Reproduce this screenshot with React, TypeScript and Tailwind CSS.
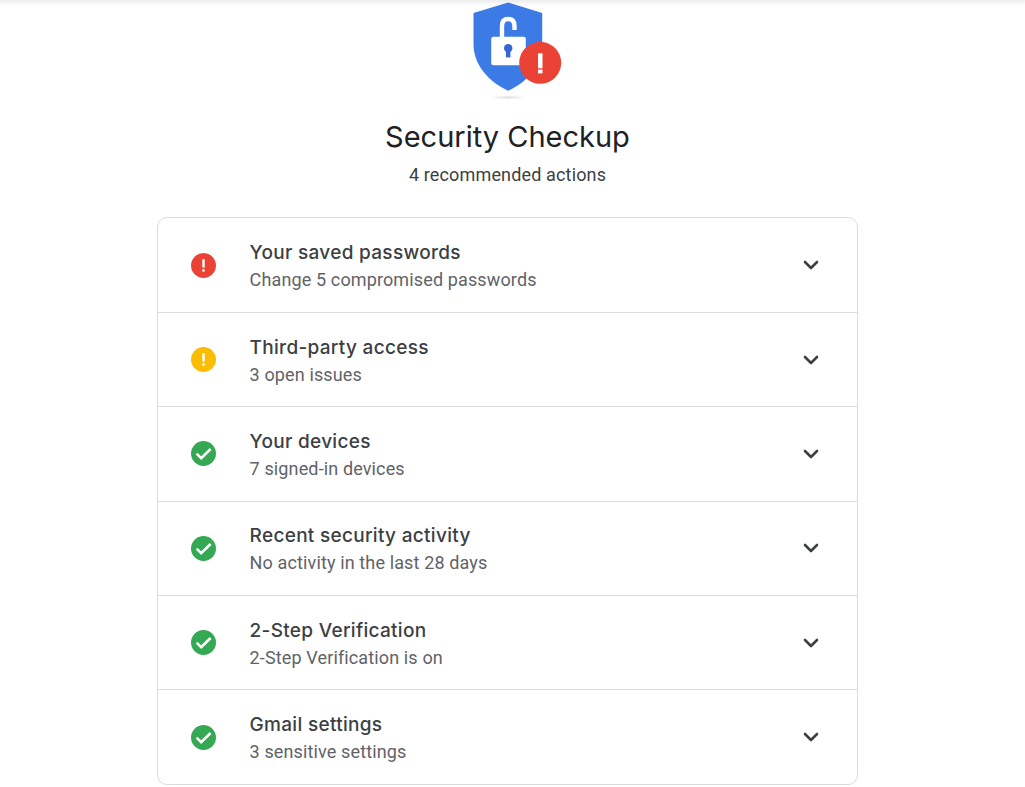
import { ChevronDown } from "lucide-react";

const ROWS = [
  { title: "Your saved passwords", sub: "Change 5 compromised passwords", status: "error" },
  { title: "Third-party access", sub: "3 open issues", status: "warn" },
  { title: "Your devices", sub: "7 signed-in devices", status: "ok" },
  { title: "Recent security activity", sub: "No activity in the last 28 days", status: "ok" },
  { title: "2-Step Verification", sub: "2-Step Verification is on", status: "ok" },
  { title: "Gmail settings", sub: "3 sensitive settings", status: "ok" },
];

function StatusIcon({ status }: { status: string }) {
  if (status === "ok") {
    return (
      <svg width="25" height="25" viewBox="0 0 25 25">
        <circle cx="12.5" cy="12.5" r="12.5" fill="#34a853" />
        <path d="M5.6 12.6l4.6 4.6 9.4-9.2" fill="none" stroke="#fff" strokeWidth="2.6" />
      </svg>
    );
  }
  return (
    <svg width="25" height="25" viewBox="0 0 25 25">
      <circle cx="12.5" cy="12.5" r="12.5" fill={status === "error" ? "#ea4335" : "#fbbc04"} />
      <rect x="11.3" y="6.2" width="2.4" height="8.4" fill="#fff" />
      <rect x="11.3" y="16.2" width="2.4" height="2.4" fill="#fff" />
    </svg>
  );
}

function ShieldLogo() {
  return (
    <svg width="120" height="100" viewBox="447.5 0 120 100" className="block">
      <defs>
        <radialGradient id="floor">
          <stop offset="0%" stopColor="#000" stopOpacity="0.14" />
          <stop offset="100%" stopColor="#000" stopOpacity="0" />
        </radialGradient>
      </defs>
      <ellipse cx="507.5" cy="97.5" rx="17" ry="2" fill="url(#floor)" />
      <path
        d="M507.7 2.5L541.7 13V44C541.7 65 527 82 507.7 90.7C488.4 82 473 65 473 44V13Z"
        fill="#3c7ae6"
      />
      <path
        d="M501.5 37V26C501.5 21.5 503.5 19 507.7 19C512 19 514 21.5 514 26V30"
        fill="none"
        stroke="#fff"
        strokeWidth="4.4"
      />
      <rect x="490.7" y="36.7" width="34.6" height="28.6" rx="2.2" fill="#fff" />
      <circle cx="507.7" cy="48.3" r="4.2" fill="#3367d6" />
      <rect x="505.5" y="49" width="4.4" height="8.4" fill="#3367d6" />
      <circle cx="539.7" cy="62.8" r="21" fill="#ea4335" />
      <rect x="537.5" y="53.3" width="4.5" height="15" fill="#fff" />
      <rect x="537.5" y="69.6" width="4.5" height="3.8" fill="#fff" />
    </svg>
  );
}

export default function App() {
  return (
    <div className="h-[787px] overflow-hidden bg-white font-['Roboto',sans-serif]">
      <div className="h-0 shadow-[0_0_5px_1px_rgba(0,0,0,0.22)]" />
      <div className="w-[1015px] flex flex-col items-center">
        <ShieldLogo />
        <h1 className="mt-[19px] text-[29px] leading-9 font-normal text-[#202124] font-['Inter',sans-serif]">
          Security Checkup
        </h1>
        <p className="mt-[8px] text-[18px] leading-6 tracking-[0.15px] text-[#3c4043]">4 recommended actions</p>
        <div className="mt-[30px] w-[701px] rounded-[10px] border border-[#dadce0] pt-[0.7px]">
          {ROWS.map((row, i) => (
            <div
              key={row.title}
              className={`flex h-[94.3px] items-center pl-[33px] pr-[34px] ${i < ROWS.length - 1 ? "border-b border-[#dadce0]" : ""}`}
            >
              <StatusIcon status={row.status} />
              <div className="ml-[33.6px] flex-1 mt-[3px]">
                <div className="text-[19px] leading-6 tracking-[0.3px] font-medium text-[#3c4043] font-['Inter',sans-serif]">
                  {row.title}
                </div>
                <div className="mt-[3px] text-[18px] leading-6 tracking-[0.13px] text-[#5f6368]">{row.sub}</div>
              </div>
              <ChevronDown size={24} strokeWidth={2.6} className="text-[#3c4043]" />
            </div>
          ))}
        </div>
      </div>
    </div>
  );
}
